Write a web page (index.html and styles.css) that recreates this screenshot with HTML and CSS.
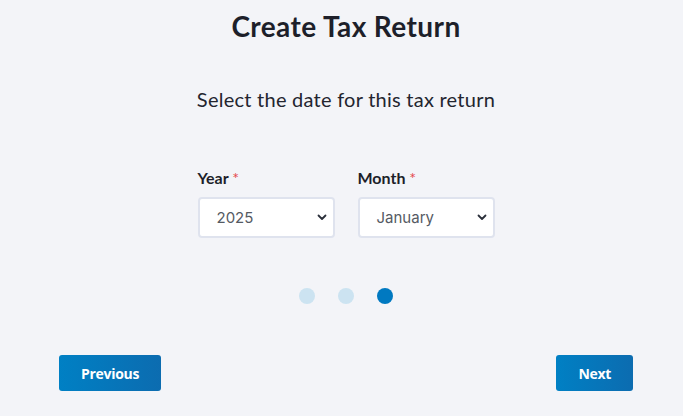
FILE: index.html
```html
<!DOCTYPE html>
<html lang="en">
<head>
<meta charset="utf-8">
<title>Create Tax Return</title>
<link rel="stylesheet" href="styles.css">
</head>
<body>
<main class="wizard">
  <h1 class="title">Create Tax Return</h1>
  <p class="subtitle">Select the date for this tax return</p>
  <div class="fields">
    <div class="field">
      <label class="label" for="year">Year <span class="req">*</span></label>
      <div class="select">
        <span class="select-value">2025</span>
        <svg class="chev" width="10" height="7" viewBox="0 0 10 7"><path d="M1.5 1.5 L5 5 L8.5 1.5" fill="none" stroke="#2b2f3a" stroke-width="1.8" stroke-linecap="round" stroke-linejoin="round"/></svg>
      </div>
    </div>
    <div class="field">
      <label class="label" for="month">Month <span class="req">*</span></label>
      <div class="select">
        <span class="select-value">January</span>
        <svg class="chev" width="10" height="7" viewBox="0 0 10 7"><path d="M1.5 1.5 L5 5 L8.5 1.5" fill="none" stroke="#2b2f3a" stroke-width="1.8" stroke-linecap="round" stroke-linejoin="round"/></svg>
      </div>
    </div>
  </div>
  <div class="dots">
    <span class="dot"></span>
    <span class="dot"></span>
    <span class="dot active"></span>
  </div>
  <div class="actions">
    <button class="btn">Previous</button>
    <button class="btn">Next</button>
  </div>
</main>
</body>
</html>
```
FILE: styles.css
```css
* { box-sizing: border-box; }
html, body { margin: 0; padding: 0; }
body {
  background: #f3f4f8;
  font-family: Lato, "Noto Sans", sans-serif;
  color: #1d1f2a;
  width: 683px;
  height: 416px;
  overflow: hidden;
}
.wizard {
  width: 574px;
  margin-left: 59px;
  display: flex;
  flex-direction: column;
  align-items: center;
}
.title {
  margin: 10px 0 0;
  font-size: 28px;
  line-height: 32px;
  font-weight: 700;
  color: #1d1f2a;
  letter-spacing: 0.4px;
}
.subtitle {
  margin: 45px 0 0;
  font-size: 20px;
  line-height: 24px;
  font-weight: 400;
  color: #23252f;
  letter-spacing: 0.25px;
}
.fields {
  margin-top: 57px;
  display: flex;
  gap: 23px;
}
.field {
  width: 137px;
  display: flex;
  flex-direction: column;
}
.label {
  font-size: 16px;
  line-height: 19px;
  font-weight: 700;
  color: #1d1f2a;
}
.req { color: #e5484d; font-weight: 400; }
.select {
  margin-top: 10px;
  height: 41px;
  background: #fff;
  border: 2px solid #dfe3ee;
  border-radius: 4px;
  display: flex;
  align-items: center;
  justify-content: space-between;
  padding: 0 6px 0 17px;
}
.select-value {
  font-family: Inter, "Noto Sans", sans-serif;
  font-size: 15px;
  color: #555a63;
}
.chev { display: block; }
.dots {
  margin-top: 50px;
  display: flex;
  gap: 23px;
}
.dot {
  width: 16px;
  height: 16px;
  border-radius: 50%;
  background: #cce3f1;
}
.dot.active { background: #0079c1; }
.actions {
  margin-top: 51px;
  align-self: stretch;
  display: flex;
  justify-content: space-between;
}
.btn {
  height: 36px;
  padding: 0 22px;
  border: none;
  border-radius: 3px;
  background: linear-gradient(90deg, #0080c4, #0c6cb0);
  color: #fff;
  font-family: "Open Sans", sans-serif;
  font-weight: 700;
  font-size: 14px;
  letter-spacing: -0.3px;
}
```
